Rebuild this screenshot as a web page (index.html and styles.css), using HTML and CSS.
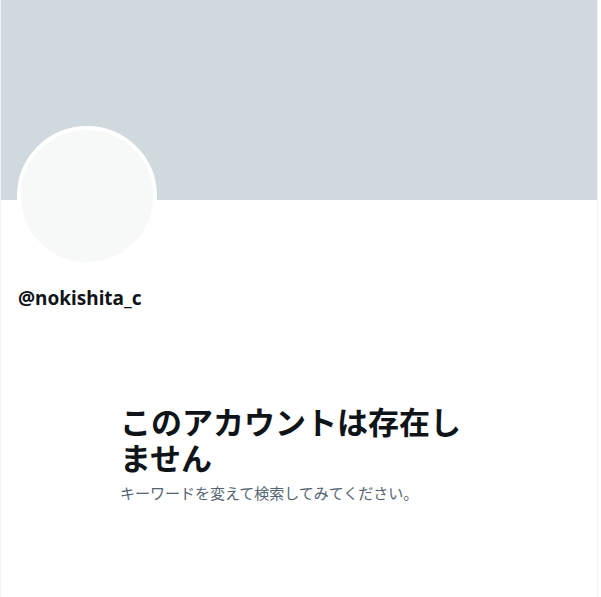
FILE: index.html
```html
<!DOCTYPE html>
<html lang="ja">
<head>
    <meta charset="UTF-8">
    <meta name="viewport" content="width=device-width, initial-scale=1.0">
    <title>@nokishita_c</title>
    <link rel="stylesheet" href="styles.css">
</head>
<body>
    <div class="profile">
        <div class="banner"></div>
        <div class="avatar-row">
            <div class="avatar"></div>
        </div>
        <div class="user-name">@nokishita_c</div>

        <div class="empty-state">
            <h2>このアカウントは存在しません</h2>
            <p>キーワードを変えて検索してみてください。</p>
        </div>
    </div>
</body>
</html>
```

FILE: styles.css
```css
body {
    font-family: 'Noto Sans', 'Noto Sans CJK JP', sans-serif;
    margin: 0;
    padding: 0;
    background: white;
    color: #0f1419;
}
.profile {
    width: 596px;
    min-height: 597px;
    border-left: 1px solid #eff3f4;
    border-right: 1px solid #eff3f4;
    box-sizing: content-box;
}
.banner {
    height: 200px;
    background: #cfd9de;
}
.avatar-row {
    padding-left: 16px;
    margin-top: -74px;
}
.avatar {
    width: 132px;
    height: 132px;
    border: 4px solid white;
    border-radius: 50%;
    background: #f7f9f9;
}
.user-name {
    margin: 20px 0 0 17px;
    font-size: 19px;
    line-height: 24px;
    font-weight: bold;
}
.empty-state {
    width: 358px;
    margin: 93px auto 0;
}
.empty-state h2 {
    margin: 0;
    font-family: 'Noto Sans CJK JP', sans-serif;
    font-size: 31px;
    line-height: 36px;
    font-weight: bold;
}
.empty-state p {
    margin: 8px 0 0;
    font-family: 'Noto Sans CJK JP', sans-serif;
    font-size: 15px;
    line-height: 20px;
    color: #536471;
}
```
